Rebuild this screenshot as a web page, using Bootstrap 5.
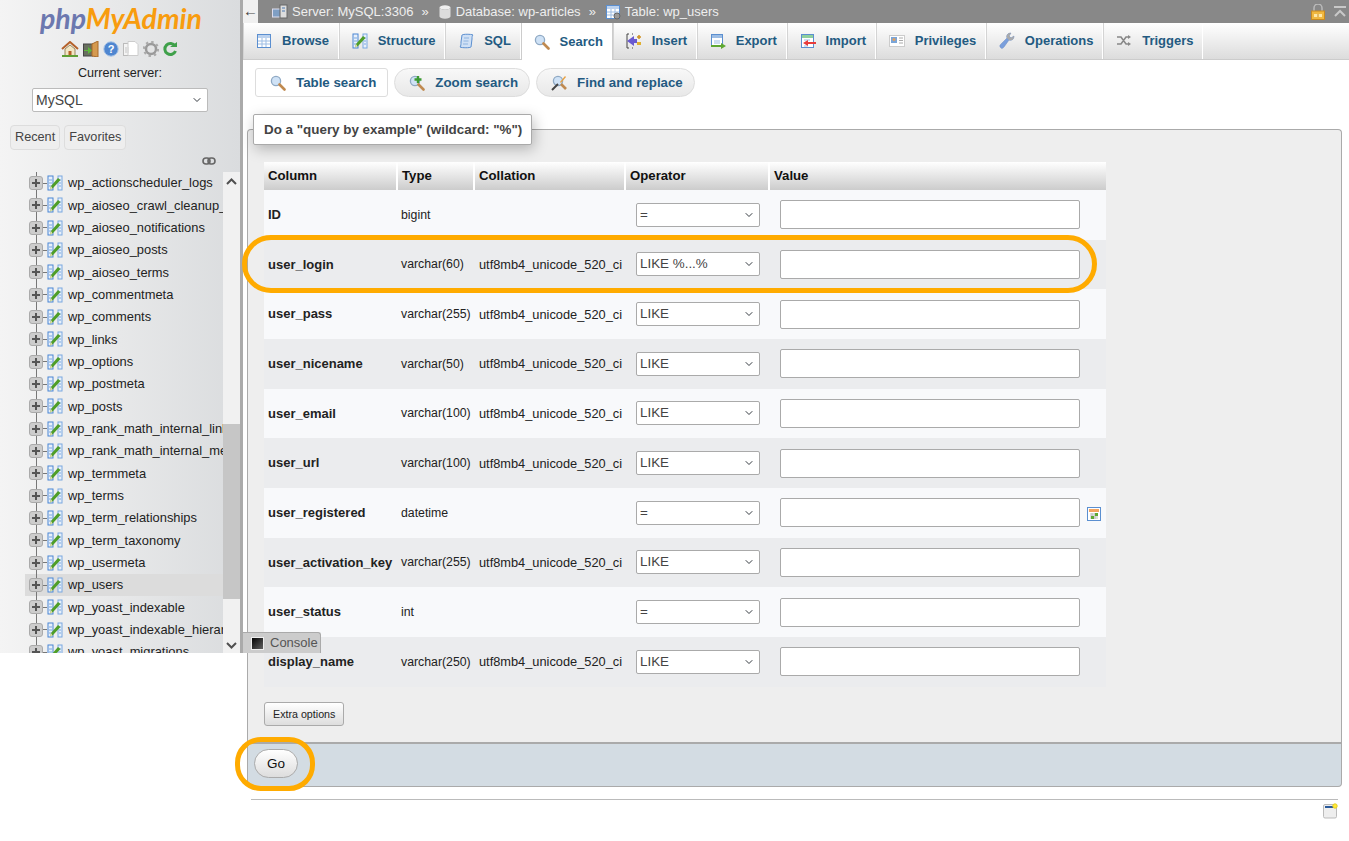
<!DOCTYPE html>
<html lang="en">
<head>
<meta charset="UTF-8">
<title>phpMyAdmin - wp_users search</title>
<link href="https://cdn.jsdelivr.net/npm/bootstrap@5.3.0/dist/css/bootstrap.min.css" rel="stylesheet">
<style>
  html, body { height: 841px; overflow: hidden; }
  body { font-family: "Liberation Sans", Arial, sans-serif; font-size: 13px; color: #444; background: #fff; position: relative; }
  svg { display: block; flex: none; }
  .pma-side { width: 240px; height: 653px; background: linear-gradient(to right, #f4f4f4, #dadcde); overflow: hidden; flex: none; }
  .pma-logo { font-family: Lato, "Liberation Sans", sans-serif; font-size: 28.5px; font-weight: 700; font-style: italic; height: 40px; line-height: 36px; padding-left: 40px; }
  .pma-logo .php { color: #6c78af; }
  .pma-logo .my { color: #f89c0e; }
  .pma-quick { height: 17px; margin-left: 61px; gap: 4px; }
  .pma-cur { font-size: 12.6px; color: #222; text-align: center; margin-top: 7px; height: 24px; line-height: 18px; }
  .pma-server { width: 176px; height: 24px; margin-left: 32px; padding: 0 0 0 3px; font-size: 14px; color: #444; border: 1px solid #bbb; border-radius: 2px; background-size: 10px 8px; background-position: right 5px center; font-family: inherit; }
  .pma-rec { margin: 13px 0 0 10px; gap: 4px; }
  .pma-rec .btn { font-size: 12.7px; color: #444; background: #eee; border: 1px solid #ddd; border-radius: 4px; padding: 0 4px; height: 25px; line-height: 23px; }
  .pma-link { height: 22px; padding: 7px 0 0 202px; }
  .pma-treewrap { height: 481px; position: relative; overflow: hidden; }
  .pma-tree { width: 223px; overflow: hidden; height: 481px; list-style: none; margin: 0; padding: 0; }
  .pma-tree li { height: 22.33px; display: flex; align-items: center; margin-left: 25px; padding-left: 4px; font-size: 12.9px; color: #222; white-space: nowrap; position: relative; }
  .pma-tree li::before { content: ""; position: absolute; left: 11px; top: 0; bottom: 0; width: 1px; background: #777; }
  .pma-tree li.cur { background: #dcdcdc; }
  .pma-tree .pma-name { margin-left: 5px; }
  .pma-plus { width: 14px; height: 14px; flex: none; background: #ccc; border: 1px solid #aaa; border-radius: 3px; position: relative; }
  .pma-plus::before { content: ""; position: absolute; left: 2px; right: 2px; top: 5px; height: 2px; background: #555; }
  .pma-plus::after { content: ""; position: absolute; top: 2px; bottom: 2px; left: 5px; width: 2px; background: #555; }
  .pma-dash { width: 4px; height: 1px; flex: none; background: #777; }
  .pma-scroll { position: absolute; right: 0; top: 0; bottom: 0; width: 17px; background: #f1f1f1; }
  .pma-thumb { position: absolute; left: 0; right: 0; top: 252px; height: 175px; background: #c6c6c6; }
  .pma-scroll svg { position: absolute; left: 3px; }
  .pma-split { width: 3px; height: 653px; background: #aaa; flex: none; }
  .pma-main { flex: 1; min-width: 0; }
  .pma-crumb { height: 23px; background: #888; color: #eee; font-size: 13px; padding-right: 2px; white-space: nowrap; }
  .pma-back { width: 15px; height: 23px; background: #f0f0f0; color: #444; font-size: 15px; line-height: 21px; text-align: center; margin-right: 14px; }
  .pma-crumb .pma-sep { margin: 0 9px 0 8px; font-size: 13px; }
  .pma-crumb svg { margin-right: 4px; }
  .pma-crumb svg:last-child { margin-right: 0; }
  .pma-tabs { height: 37px; background: linear-gradient(#fff, #dcdcdc); border-bottom: 1px solid #ccc; flex-wrap: nowrap; }
  .pma-tabs .nav-link { height: 36px; display: flex; align-items: center; gap: 10px; padding: 0 8.7px 0 12px; color: #235a81; font-weight: 700; font-size: 13px; border-right: 1px solid #fff; border-left: 1px solid #d4d4d4; border-radius: 0; white-space: nowrap; }
  .pma-tabs .nav-link.active { background: #fff; height: 37px; border-left: 1px solid #ccc; border-right: 1px solid #ccc; }
  .pma-subs { padding: 8px 0 0 12px; gap: 6px; height: 37px; }
  .pma-subs .nav-link { height: 29px; display: flex; align-items: center; gap: 10px; padding: 0 11px 0 14px; font-size: 13.3px; font-weight: 700; color: #235a81; background: linear-gradient(#f8f8f8, #e8e8e8); border: 1px solid #ddd; border-radius: 15px; white-space: nowrap; }
  .pma-subs .nav-link.active { background: #fff; border-radius: 3px; }
  .pma-tip { position: absolute; left: 253px; top: 114px; width: 279px; height: 31px; z-index: 3; background: #fff; border: 1px solid #aaa; border-radius: 2px; box-shadow: 2px 4px 14px rgba(0,0,0,.25); font-weight: 700; color: #444; font-size: 13.4px; line-height: 29px; padding-left: 10px; white-space: nowrap; }
  .pma-field { margin: 32px 7px 0 4px; background: #eee; border: 1px solid #aaa; border-bottom: 0; border-radius: 4px 4px 0 0; height: 613px; padding: 32px 0 0 16px; }
  .pma-grid { width: 842px; table-layout: fixed; border-collapse: collapse; margin: 0; color: #222; }
  .pma-grid th { height: 28px; padding: 0 4px; font-size: 13.2px; color: #111; background: linear-gradient(#fff, #ccc); border-left: 2px solid #fff; }
  .pma-grid th:first-child { border-left: 0; }
  .pma-grid td { height: 49.66px; padding: 0 4px; font-size: 12.3px; white-space: nowrap; background: #f8f9fb; vertical-align: middle; }
  .pma-grid td:nth-child(3) { font-size: 12.8px; padding-left: 5px; }
  .pma-grid tr.pma-alt td { background: #ebecee; }
  .pma-grid td.pma-col { font-weight: 700; font-size: 13px; color: #222; }
  .pma-grid td.pma-val { position: relative; }
  .pma-op { width: 124px; height: 24px; margin-left: 7px; padding: 0 0 0 3px; font-size: 13.4px; color: #444; border: 1px solid #aaa; border-radius: 2px; background-size: 10px 8px; background-position: right 5px center; font-family: inherit; }
  .pma-in { width: 300px; height: 29px; margin-left: 7px; border: 1px solid #aaa; border-radius: 2px; padding: 0 4px; }
  .pma-cal { position: absolute; left: 318px; top: 19px; }
  .pma-extra { margin-top: 15px; height: 24px; padding: 0 8px; font-size: 10.7px; line-height: 22px; color: #222; background: linear-gradient(#fff, #ddd); border: 1px solid #aaa; border-radius: 3px; }
  .pma-foot { margin: 0 7px 0 4px; height: 45px; background: #d3dce3; border: 1px solid #aaa; border-top: 2px solid #aaa; border-radius: 0 0 4px 0; padding: 5px 0 0 6px; }
  .pma-go { width: 44px; height: 29px; padding: 0; font-size: 13.5px; line-height: 26px; font-weight: 400; color: #111; background: linear-gradient(#fff, #ddd); border: 1px solid #aaa; border-radius: 15px; }
  .pma-rule { margin: 12px 11px 0 8px; border: 0; border-top: 1px solid #bbb; opacity: 1; }
  .pma-newwin { margin: 3px 0 0 1080px; }
  .pma-console { position: absolute; left: 243px; top: 632px; width: 78px; height: 21px; z-index: 2; background: #ccc; border: 1px solid #aaa; border-bottom: 0; border-left: 0; border-radius: 0 3px 0 0; font-size: 13px; color: #555; display: flex; align-items: center; gap: 6px; padding-left: 8px; }
  .pma-ring { position: absolute; border: 5.5px solid #ffab00; z-index: 4; pointer-events: none; }
  .pma-ring-a { left: 242px; top: 235px; width: 855px; height: 58px; border-radius: 29px; }
  .pma-ring-b { left: 235px; top: 737px; width: 80px; height: 54px; border-radius: 26px; }
</style>
</head>
<body>
<svg width="0" height="0" class="position-absolute">
  <symbol id="i-prop" viewBox="0 0 16 16"><rect x="1" y="1" width="5" height="14" fill="#e8f0fa" stroke="#4a86d4"/><rect x="11" y="1" width="4" height="14" fill="#e8f0fa" stroke="#7aa8e0"/><path d="M2 5h3M2 8h3M2 11h3M12 5h2M12 8h2M12 11h2" stroke="#7aa8e0"/><path d="M3 14.500l2.500-1 8-8.500-2.500-2-7 8z" fill="#4f9e28"/><path d="M3 14.500l1-3.500 1.500 2.500z" fill="#e8e0b0"/></symbol>
  <symbol id="i-search" viewBox="0 0 16 16"><circle cx="6" cy="6" r="4.6" fill="#cfe2f6" stroke="#8fa9c4" stroke-width="1.3"/><path d="M9.5 9.5l5 5" stroke="#c08a50" stroke-width="2.6" stroke-linecap="round"/></symbol>
  <symbol id="i-page" viewBox="0 0 16 16"><rect x="1.5" y="1.5" width="13" height="13" fill="#fff" stroke="#5b8fd0"/><path d="M2 2h12v3H2z" fill="#bcd2ee"/><path d="M2 8h12M2 11h12M6 5v9M10 5v9" stroke="#9dbde4"/></symbol>
  <symbol id="i-plus" viewBox="0 0 16 16"><circle cx="6" cy="6" r="4.6" fill="#cfe2f6" stroke="#8fa9c4" stroke-width="1.3"/><path d="M9.5 9.5l5 5" stroke="#c08a50" stroke-width="2.6" stroke-linecap="round"/><path d="M9 1v7M5.5 4.500h7" stroke="#3c9a32" stroke-width="2.4"/></symbol>
</svg>

<div class="d-flex">
  <aside class="pma-side">
    <div class="pma-logo"><span class="php">php</span><span class="my">MyAdmin</span></div>
    <div class="pma-quick d-flex align-items-center">
      <svg width="18" height="16" viewBox="0 0 18 16"><path d="M1 8l8-7 8 7" fill="none" stroke="#b4612a" stroke-width="2"/><path d="M4 8v7h10V8L9 4z" fill="#f2e6c4" stroke="#9a8a60"/><rect x="7.500" y="10" width="3" height="5" fill="#b4612a"/><path d="M1 15h16" stroke="#5f9f35" stroke-width="2"/></svg>
      <svg width="16" height="16" viewBox="0 0 16 16"><rect x="0.500" y="3" width="9" height="12" fill="#68705f" stroke="#444"/><path d="M9 3l6-3v16l-6-1z" fill="#d59a50" stroke="#a86a2a"/><path d="M1 9h4V6l4 3.500L5 13v-3H1z" fill="#5fb83c"/></svg>
      <svg width="16" height="16" viewBox="0 0 16 16"><circle cx="8" cy="8" r="7.200" fill="#4f86d0" stroke="#a8c4e6"/><text x="8" y="12" font-size="11" font-weight="700" text-anchor="middle" fill="#fff" font-family="Liberation Sans">?</text></svg>
      <svg width="16" height="16" viewBox="0 0 16 16"><rect x="0.500" y="2.500" width="9" height="12" fill="#f4f4f4" stroke="#bbb"/><path d="M5 .5h7l3 3v11H5z" fill="#fff" stroke="#ccc"/><rect x="2" y="6" width="4" height="6" fill="#ddd"/></svg>
      <svg width="16" height="16" viewBox="0 0 16 16"><circle cx="8" cy="8" r="5" fill="none" stroke="#9a9a9a" stroke-width="2.500"/><circle cx="8" cy="8" r="7" fill="none" stroke="#aaa" stroke-width="2.200" stroke-dasharray="2.400 3.100"/><circle cx="8" cy="8" r="2" fill="#e4e4e4"/></svg>
      <svg width="14" height="16" viewBox="0 0 14 16"><path d="M12 5A5.500 5.500 0 1 0 12.500 10" fill="none" stroke="#3fa04a" stroke-width="3"/><path d="M7 6h7V1z" fill="#3fa04a"/></svg>
    </div>
    <div class="pma-cur">Current server:</div>
    <select class="form-select pma-server"><option>MySQL</option></select>
    <div class="pma-rec d-flex"><button class="btn" type="button">Recent</button><button class="btn" type="button">Favorites</button></div>
    <div class="pma-link"><svg width="14" height="8" viewBox="0 0 14 8"><rect x="1" y="1" width="7" height="6" rx="3" fill="none" stroke="#666" stroke-width="1.600"/><rect x="6" y="1" width="7" height="6" rx="3" fill="none" stroke="#666" stroke-width="1.600"/></svg></div>
    <div class="pma-treewrap">
      <ul class="pma-tree" id="tree"></ul>
      <div class="pma-scroll">
        <div class="pma-thumb"></div>
        <svg style="top:6px" width="11" height="7" viewBox="0 0 11 7"><path d="M1 6l4.500-4.500L10 6" fill="none" stroke="#505050" stroke-width="2"/></svg>
        <svg style="bottom:4px" width="11" height="7" viewBox="0 0 11 7"><path d="M1 1l4.500 4.500L10 1" fill="none" stroke="#505050" stroke-width="2"/></svg>
      </div>
    </div>
  </aside>
  <div class="pma-split"></div>

  <main class="pma-main">
    <div class="pma-crumb d-flex align-items-center">
      <div class="pma-back">&#8592;</div>
      <svg width="16" height="16" viewBox="0 0 16 16"><rect x="0.500" y="5" width="9" height="8" fill="#7f9fc4" stroke="#dde"/><rect x="8" y="1" width="7" height="13" fill="#ddd" stroke="#666"/><path d="M10 4h3M10 7h3" stroke="#4a78b0"/></svg>
      <span>Server: MySQL:3306</span><span class="pma-sep">»</span>
      <svg width="14" height="16" viewBox="0 0 14 16"><ellipse cx="7" cy="3.500" rx="5.500" ry="2.200" fill="#eee"/><path d="M1.500 3.500v9c0 1.200 2.500 2.200 5.500 2.200s5.500-1 5.500-2.200v-9c0 1.200-2.500 2.200-5.500 2.200s-5.500-1-5.500-2.200z" fill="#ddd"/></svg>
      <span>Database: wp-articles</span><span class="pma-sep">»</span>
      <svg width="16" height="16" viewBox="0 0 16 16"><use href="#i-page"/><circle cx="12" cy="12" r="3" fill="#999" stroke="#666"/></svg>
      <span>Table: wp_users</span>
      <svg class="ms-auto" width="14" height="16" viewBox="0 0 14 16"><path d="M3 7V4a4 4 0 0 1 8 0v3" fill="none" stroke="#bbb" stroke-width="1.500"/><rect x="0.500" y="7" width="13" height="8.500" fill="#f0b840" stroke="#c88a20"/><path d="M3 10h8v3H3z" fill="#ffe9a8"/><path d="M7 10v3" stroke="#c88a20"/></svg>
      <svg class="ms-1" width="14" height="12" viewBox="0 0 14 12"><path d="M1 1h12M2 10l5-5 5 5" fill="none" stroke="#c8c8c8" stroke-width="2"/></svg>
    </div>

    <ul class="nav pma-tabs">
      <li class="nav-item"><a class="nav-link" href="#"><svg width="16" height="16"><use href="#i-page"/></svg>Browse</a></li>
      <li class="nav-item"><a class="nav-link" href="#"><svg width="16" height="16" viewBox="0 0 16 16"><use href="#i-prop"/></svg>Structure</a></li>
      <li class="nav-item"><a class="nav-link" href="#"><svg width="16" height="16" viewBox="0 0 16 16"><path d="M4 2c1-1 9-1 11 0-1 1-1 2-1 4l-1 8c-1 1-9 1-11 0 1-1 1-3 1-5z" fill="#cfe0f5" stroke="#5b8fd0"/><path d="M6 5h5M5.500 8h5M5 11h5" stroke="#8fb4e0"/></svg>SQL</a></li>
      <li class="nav-item"><a class="nav-link active" href="#"><svg width="16" height="16"><use href="#i-search"/></svg>Search</a></li>
      <li class="nav-item"><a class="nav-link" href="#"><svg width="16" height="16" viewBox="0 0 16 16"><path d="M3 1H1v14h2M6 1h1M6 15h1" fill="none" stroke="#444"/><path d="M1 8l7-5v3h3v4H8v3z" fill="#6a5ad0"/><path d="M13 2v4M11 4h4" stroke="#d09020" stroke-width="1.500"/><rect x="11" y="9" width="4" height="3" fill="#e0b030"/></svg>Insert</a></li>
      <li class="nav-item"><a class="nav-link" href="#"><svg width="16" height="16" viewBox="0 0 16 16"><rect x="1.500" y="1.500" width="11" height="12" fill="#fff" stroke="#5b8fd0"/><path d="M2 2h10v3H2z" fill="#9dbde4"/><path d="M4 8h6M4 10h6" stroke="#9dbde4"/><path d="M1 12h10v-2l5 3-5 3v-2H1z" fill="#5fa832"/></svg>Export</a></li>
      <li class="nav-item"><a class="nav-link" href="#"><svg width="16" height="16" viewBox="0 0 16 16"><rect x="1.500" y="1.500" width="12" height="13" fill="#fff" stroke="#5b8fd0"/><path d="M2 2h11v3H2z" fill="#8fd09d"/><path d="M4 7h6M4 13h4" stroke="#9dbde4"/><path d="M16 9H8V7l-5 3 5 3v-2h8z" fill="#e83c3c"/></svg>Import</a></li>
      <li class="nav-item"><a class="nav-link" href="#"><svg width="16" height="14" viewBox="0 0 16 14"><rect x="0.500" y="1.500" width="15" height="11" fill="#fff" stroke="#ccc"/><rect x="2" y="3" width="6" height="6" fill="#7aa5d8"/><circle cx="5" cy="5.500" r="1.500" fill="#e0a060"/><path d="M10 4h4M10 6.500h4M10 9h4" stroke="#aaa"/></svg>Privileges</a></li>
      <li class="nav-item"><a class="nav-link" href="#"><svg width="16" height="18" viewBox="0 0 16 18"><path d="M2 16c-2-2-1-3 0-4l6-6c-1-3 1-5 4-5l-2 3 2 2 3-2c0 3-2 5-5 4l-5 7c-1 1-2 2-3 1z" fill="#7a9fdc" stroke="#6a8ac0" stroke-width=".5"/><path d="M8 6c-1-3 1-5 4-5l-2 3 2 2 3-2c0 3-2 5-5 4z" fill="#aaa"/></svg>Operations</a></li>
      <li class="nav-item"><a class="nav-link" href="#"><svg width="16" height="12" viewBox="0 0 16 12"><path d="M1 2h4l5 7h3M1 9h4l5-7h3" fill="none" stroke="#888" stroke-width="1.600"/><path d="M12 0l3 2-3 2zM12 7l3 2-3 2z" fill="#888"/></svg>Triggers</a></li>
    </ul>

    <ul class="nav pma-subs">
      <li class="nav-item"><a class="nav-link active" href="#"><svg width="16" height="16"><use href="#i-search"/></svg>Table search</a></li>
      <li class="nav-item"><a class="nav-link" href="#"><svg width="16" height="16"><use href="#i-plus"/></svg>Zoom search</a></li>
      <li class="nav-item"><a class="nav-link" href="#"><svg width="16" height="16" viewBox="0 0 16 16"><circle cx="7" cy="6" r="4.600" fill="#cfe2f6" stroke="#8fa9c4" stroke-width="1.300"/><path d="M1 15l6-6" stroke="#444" stroke-width="2"/><path d="M10 9l5 5" stroke="#c08a50" stroke-width="2.600"/><path d="M9 7l5-6 1 1-5 6z" fill="#e8a040"/></svg>Find and replace</a></li>
    </ul>

    <div class="pma-field">
      <table class="pma-grid">
        <colgroup><col style="width:133px"><col style="width:77px"><col style="width:151px"><col style="width:144px"><col></colgroup>
        <thead><tr><th>Column</th><th>Type</th><th>Collation</th><th>Operator</th><th>Value</th></tr></thead>
        <tbody id="rows"></tbody>
      </table>
      <button class="btn pma-extra" type="button">Extra options</button>
    </div>
    <div class="pma-foot"><button class="btn pma-go" type="button">Go</button></div>
    <hr class="pma-rule">
    <div class="pma-newwin"><svg width="15" height="16" viewBox="0 0 15 16"><rect x="0.500" y="1.500" width="13" height="13.500" rx="1.500" fill="#eee" stroke="#bbb"/><path d="M2 4h9" stroke="#2a5a9a" stroke-width="2"/><circle cx="12" cy="3" r="2.200" fill="#ffe93c" stroke="#e8d020"/></svg></div>
  </main>
</div>

<div class="pma-tip">Do a "query by example" (wildcard: "%")</div>
<div class="pma-console"><svg width="13" height="13" viewBox="0 0 13 13"><defs><linearGradient id="cg" x1="0" y1="0" x2="1" y2="1"><stop offset="0" stop-color="#000"/><stop offset="1" stop-color="#666"/></linearGradient></defs><rect x="0.500" y="0.500" width="12" height="12" fill="url(#cg)" stroke="#eee"/></svg>Console</div>
<div class="pma-ring pma-ring-a"></div>
<div class="pma-ring pma-ring-b"></div>

<script>
  const tables = ['wp_actionscheduler_logs','wp_aioseo_crawl_cleanup_logs','wp_aioseo_notifications','wp_aioseo_posts','wp_aioseo_terms','wp_commentmeta','wp_comments','wp_links','wp_options','wp_postmeta','wp_posts','wp_rank_math_internal_links','wp_rank_math_internal_meta','wp_termmeta','wp_terms','wp_term_relationships','wp_term_taxonomy','wp_usermeta','wp_users','wp_yoast_indexable','wp_yoast_indexable_hierarchy','wp_yoast_migrations'];
  document.getElementById('tree').innerHTML = tables.map(t => `
    <li class="${t === 'wp_users' ? 'cur' : ''}"><span class="pma-plus"></span><span class="pma-dash"></span><svg width="16" height="16" viewBox="0 0 16 16"><use href="#i-prop"/></svg><span class="pma-name">${t}</span></li>`).join('');

  const coll = 'utf8mb4_unicode_520_ci';
  const cols = [
    ['ID','bigint','','='],
    ['user_login','varchar(60)',coll,'LIKE %...%'],
    ['user_pass','varchar(255)',coll,'LIKE'],
    ['user_nicename','varchar(50)',coll,'LIKE'],
    ['user_email','varchar(100)',coll,'LIKE'],
    ['user_url','varchar(100)',coll,'LIKE'],
    ['user_registered','datetime','','='],
    ['user_activation_key','varchar(255)',coll,'LIKE'],
    ['user_status','int','','='],
    ['display_name','varchar(250)',coll,'LIKE']
  ];
  const cal = '<svg class="pma-cal" width="14" height="14" viewBox="0 0 14 14"><rect x="0.500" y="0.500" width="13" height="13" fill="#fff" stroke="#5b8fd0"/><path d="M2 2h10v3H2z" fill="#f4a460"/><path d="M3 7h8M3 9h8M3 11h8M5 6v6M8 6v6" stroke="#bbb"/><rect x="8" y="6" width="3" height="3" fill="#5fa832"/><rect x="4" y="9" width="3" height="3" fill="#5fa832"/></svg>';
  document.getElementById('rows').innerHTML = cols.map((c, i) => `
    <tr class="${i % 2 ? 'pma-alt' : ''}">
      <td class="pma-col">${c[0]}</td><td>${c[1]}</td><td>${c[2]}</td>
      <td><select class="form-select pma-op"><option>${c[3]}</option></select></td>
      <td class="pma-val"><input type="text" class="form-control pma-in">${c[0] === 'user_registered' ? cal : ''}</td>
    </tr>`).join('');
</script>
<script src="https://cdn.jsdelivr.net/npm/bootstrap@5.3.0/dist/js/bootstrap.bundle.min.js"></script>
</body>
</html>
